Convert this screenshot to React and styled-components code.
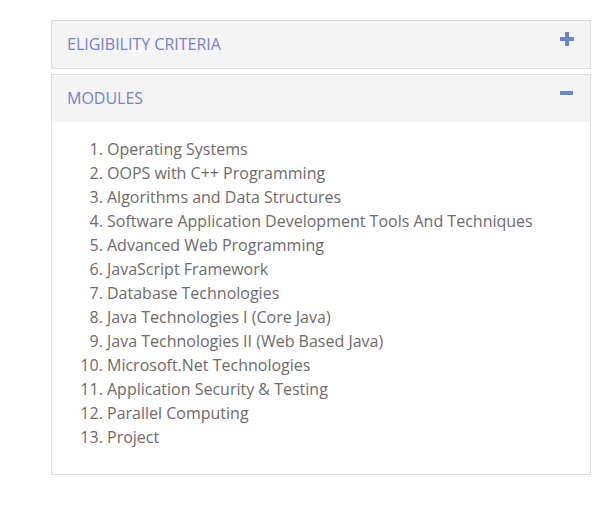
import React, { useState } from 'react'
import styled, { createGlobalStyle } from 'styled-components'

const GlobalStyle = createGlobalStyle`
  body {
    margin: 0;
    background: #fff;
    font-family: "Open Sans", "Liberation Sans", sans-serif;
  }
`

const modules = [
  'Operating Systems',
  'OOPS with C++ Programming',
  'Algorithms and Data Structures',
  'Software Application Development Tools And Techniques',
  'Advanced Web Programming',
  'JavaScript Framework',
  'Database Technologies',
  'Java Technologies I (Core Java)',
  'Java Technologies II (Web Based Java)',
  'Microsoft.Net Technologies',
  'Application Security & Testing',
  'Parallel Computing',
  'Project',
]

function App() {
  const [open, setOpen] = useState('modules')

  const toggle = (key) => setOpen(open === key ? null : key)

  return (
    <Wrapper>
      <GlobalStyle />
      <Panel>
        <Header onClick={() => toggle('eligibility')}>
          <Title>Eligibility Criteria</Title>
          <Icon>{open === 'eligibility' ? <Minus /> : <Plus />}</Icon>
        </Header>
        {open === 'eligibility' && <Body />}
      </Panel>

      <Panel>
        <Header onClick={() => toggle('modules')}>
          <Title>Modules</Title>
          <Icon>{open === 'modules' ? <Minus /> : <Plus />}</Icon>
        </Header>
        {open === 'modules' && (
          <Body>
            <List>
              {modules.map((m) => (
                <li key={m}>{m}</li>
              ))}
            </List>
          </Body>
        )}
      </Panel>
    </Wrapper>
  )
}

const Plus = () => (
  <svg width="14" height="14" viewBox="0 0 14 14">
    <rect x="5" y="0" width="4" height="14" fill="#6b84d2" />
    <rect x="0" y="5" width="14" height="4" fill="#6b84d2" />
  </svg>
)

const Minus = () => (
  <svg width="14" height="14" viewBox="0 0 14 14">
    <rect x="0" y="5" width="13" height="4" fill="#6b84d2" />
  </svg>
)

const Wrapper = styled.div`
  width: 540px;
  padding: 20px 0 0 51px;
  display: flex;
  flex-direction: column;
  gap: 5px;
`

const Panel = styled.div`
  border: 1px solid #dcdcdc;
  background: #fff;
`

const Header = styled.div`
  height: 47px;
  background: #f4f4f4;
  padding: 0 16px 0 15px;
  display: flex;
  align-items: center;
  justify-content: space-between;
  cursor: pointer;
`

const Title = styled.span`
  font-size: 16px;
  color: #7681cf;
  text-transform: uppercase;
  margin-bottom: 2px;
`

const Icon = styled.span`
  display: flex;
  align-self: flex-start;
  margin-top: 11px;
`

const Body = styled.div`
  padding: 15px 15px 15px;
`

const List = styled.ol`
  margin: 0 0 10px;
  padding-left: 40px;
  font-size: 16px;
  line-height: 24px;
  color: #6f6a6a;
`

export default App
